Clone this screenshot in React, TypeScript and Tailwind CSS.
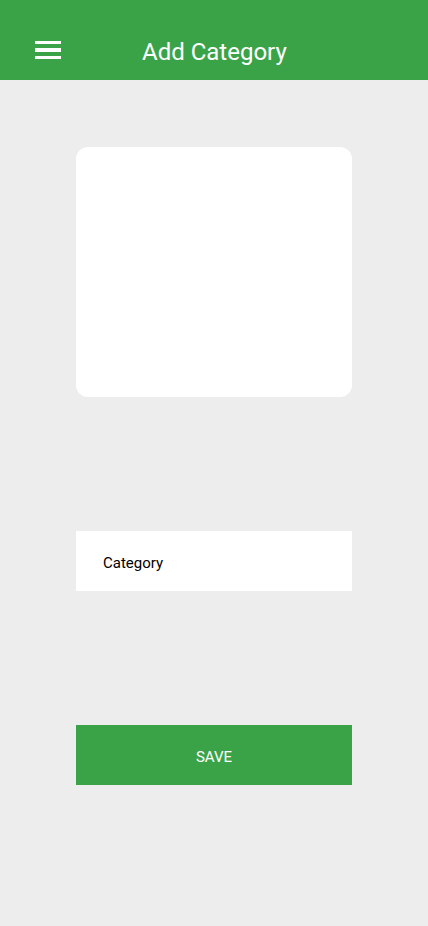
export default function App() {
  return (
    <div className="w-[428px] h-[926px] bg-[#ededed] flex flex-col" style={{ fontFamily: 'Roboto, "Noto Sans", sans-serif' }}>
      <header className="h-[80px] bg-[#3aa348] flex items-center shrink-0 relative">
        <div className="ml-[35px] mt-[20px] flex flex-col gap-[4px] w-[26px]">
          <div className="h-[3px] bg-white" />
          <div className="h-[4px] bg-white" />
          <div className="h-[3px] bg-white" />
        </div>
        <div className="ml-[81px] mt-[24px] text-white text-[24px] leading-none">Add Category</div>
      </header>
      <div className="flex flex-col items-center">
        <div className="mt-[67px] w-[276px] h-[250px] bg-white rounded-[12px]" />
        <div className="mt-[134px] w-[276px] h-[60px] bg-white flex items-center pl-[27px] pt-[4px] text-[15px] text-black">
          Category
        </div>
        <button className="mt-[134px] w-[276px] h-[60px] bg-[#3aa348] text-white text-[15px] flex items-center justify-center pt-[4px]">
          SAVE
        </button>
      </div>
    </div>
  );
}
